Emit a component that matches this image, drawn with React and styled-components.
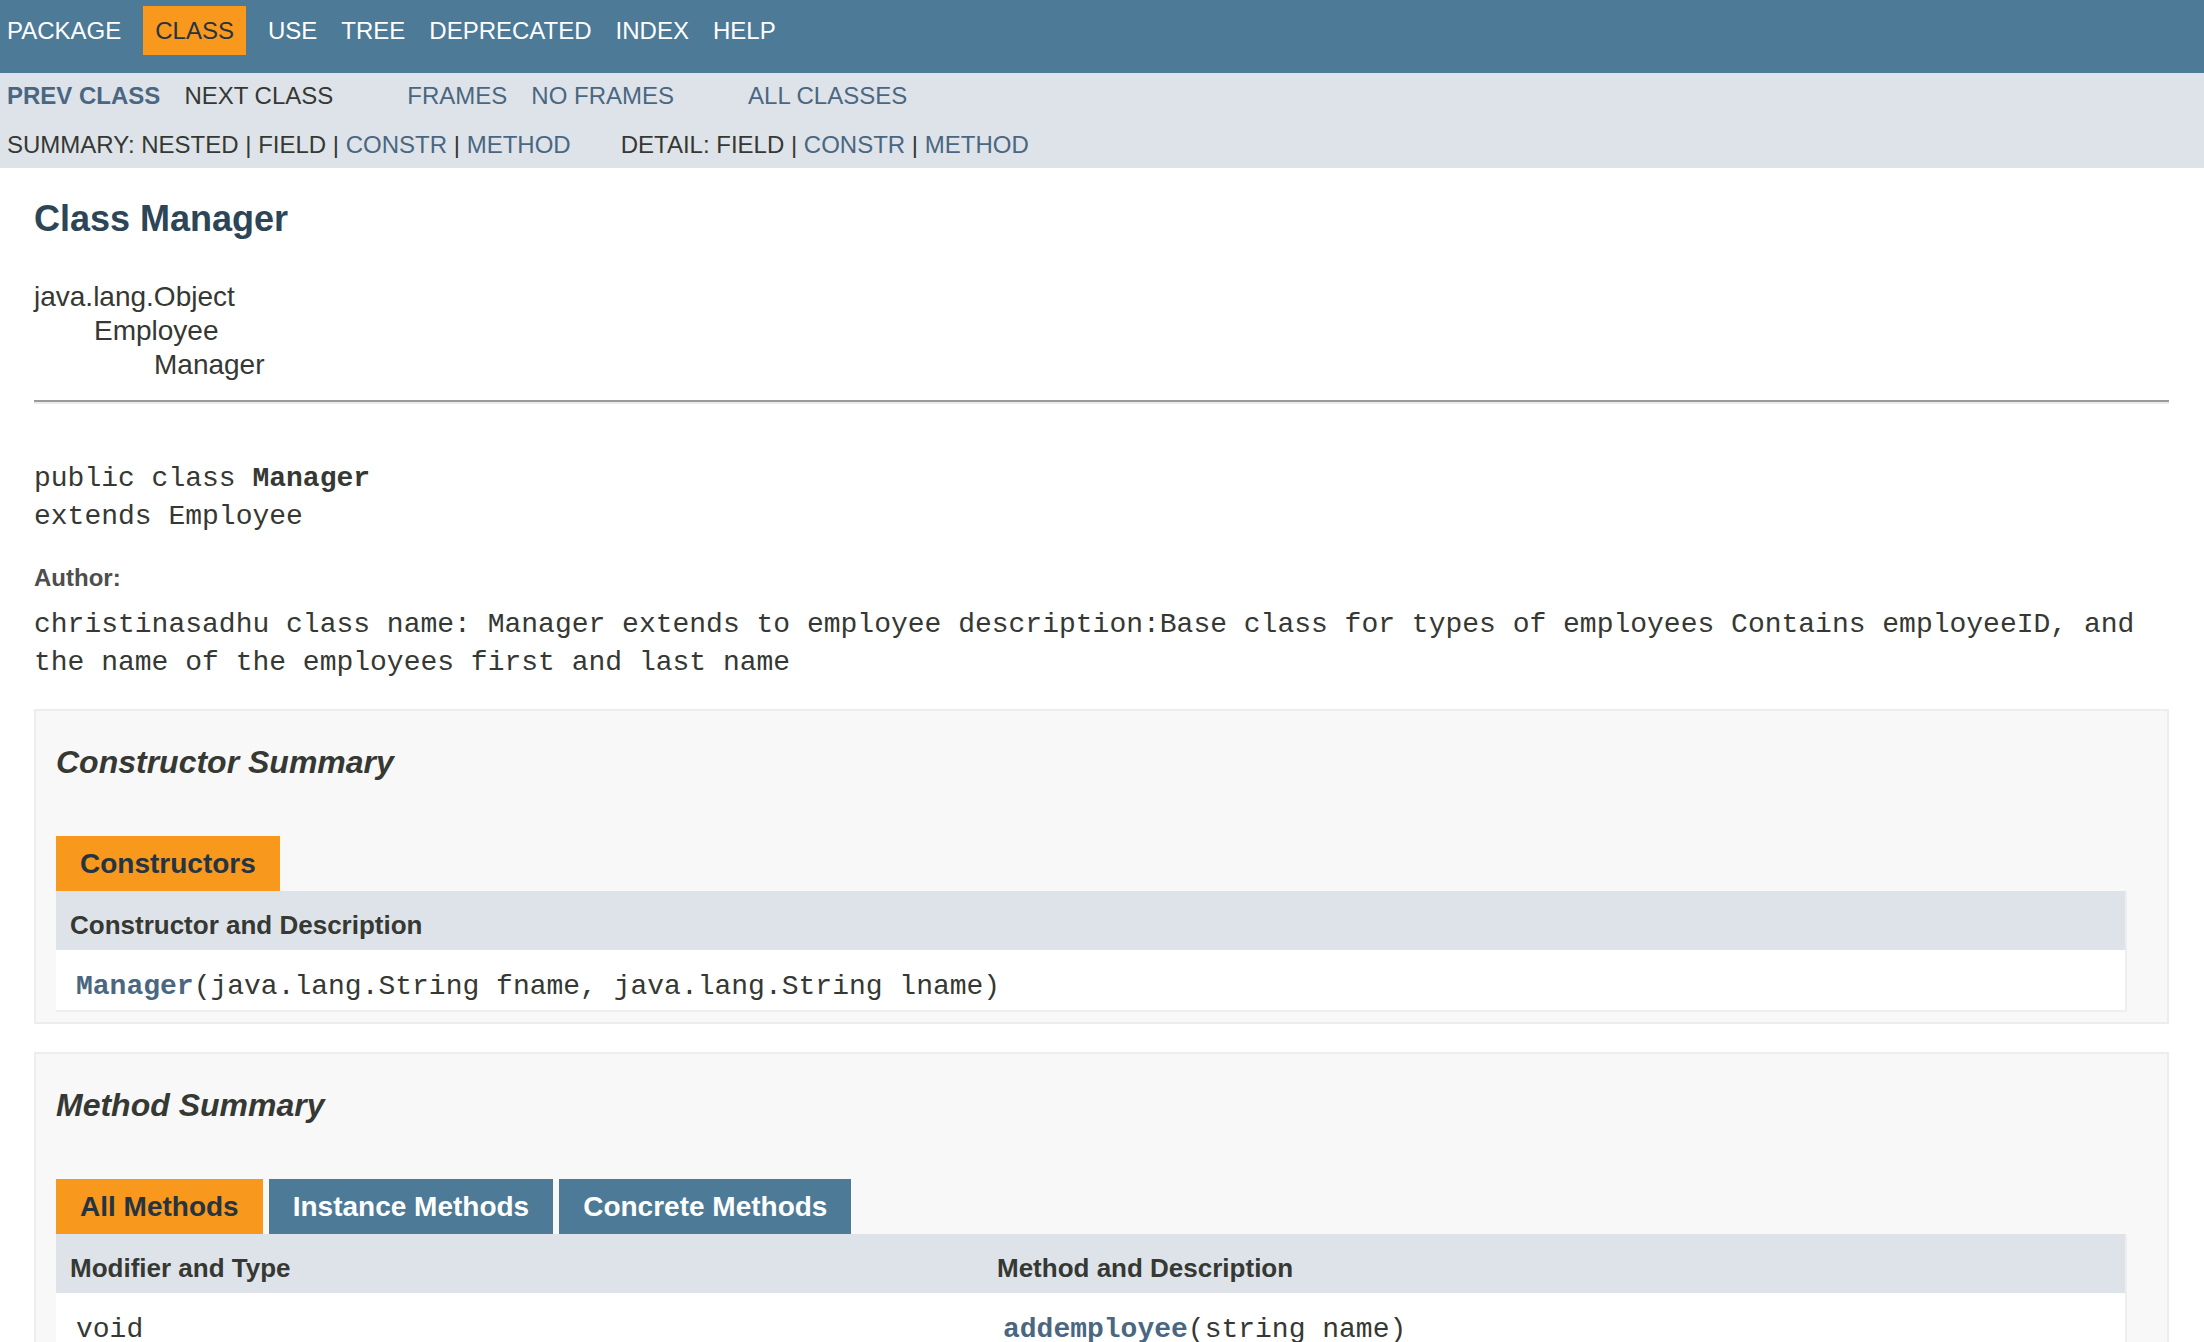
import styled, { createGlobalStyle } from 'styled-components';

const GlobalStyle = createGlobalStyle`
	html, body {
		margin: 0;
		padding: 0;
		overflow: hidden;
		background: #ffffff;
	}
	body {
		font-family: 'Liberation Sans', Arial, Helvetica, sans-serif;
		color: #353833;
	}
	a {
		color: #4a6782;
		text-decoration: none;
	}
`;

const topItems = ['Package', 'Class', 'Use', 'Tree', 'Deprecated', 'Index', 'Help'];

export default function App() {
	return (
		<>
			<GlobalStyle />
			<TopNav>
				<NavList>
					{topItems.map((item) => (
						<NavItem key={item} $active={item === 'Class'}>
							{item}
						</NavItem>
					))}
				</NavList>
			</TopNav>

			<SubNav>
				<SubRow>
					<SubList>
						<SubItem>
							<a href='#prev'>
								<strong>Prev Class</strong>
							</a>
						</SubItem>
						<SubItem>Next Class</SubItem>
					</SubList>
					<SubList>
						<SubItem>
							<a href='#frames'>Frames</a>
						</SubItem>
						<SubItem>
							<a href='#noframes'>No Frames</a>
						</SubItem>
					</SubList>
					<SubList>
						<SubItem>
							<a href='#all'>All Classes</a>
						</SubItem>
					</SubList>
				</SubRow>
				<SubRow $second>
					<SubList $tight>
						<SubItem $tight>
							Summary:&nbsp;Nested&nbsp;|&nbsp;Field&nbsp;|&nbsp;
							<a href='#constr'>Constr</a>&nbsp;|&nbsp;
							<a href='#method'>Method</a>
						</SubItem>
					</SubList>
					<SubList $tight>
						<SubItem $tight>
							Detail:&nbsp;Field&nbsp;|&nbsp;
							<a href='#constr'>Constr</a>&nbsp;|&nbsp;
							<a href='#method'>Method</a>
						</SubItem>
					</SubList>
				</SubRow>
			</SubNav>

			<Content>
				<Title>Class Manager</Title>
				<Tree>
					<TreeLine $depth={0}>java.lang.Object</TreeLine>
					<TreeLine $depth={1}>Employee</TreeLine>
					<TreeLine $depth={2}>Manager</TreeLine>
				</Tree>
				<Rule />
				<Signature>
					public class <strong>Manager</strong>
					{'\n'}extends Employee
				</Signature>
				<TagLabel>Author:</TagLabel>
				<TagText>
					christinasadhu class name: Manager extends to employee description:Base class for types of
					employees Contains employeeID, and the name of the employees first and last name
				</TagText>

				<Block>
					<BlockTitle>Constructor Summary</BlockTitle>
					<Tabs>
						<Tab $active>Constructors</Tab>
					</Tabs>
					<SummaryTable $cols='1fr'>
						<HeadCell>Constructor and Description</HeadCell>
						<Cell>
							<MemberLink href='#manager'>Manager</MemberLink>(java.lang.String fname, java.lang.String lname)
						</Cell>
					</SummaryTable>
				</Block>

				<Block>
					<BlockTitle>Method Summary</BlockTitle>
					<Tabs>
						<Tab $active>All Methods</Tab>
						<Tab>Instance Methods</Tab>
						<Tab>Concrete Methods</Tab>
					</Tabs>
					<SummaryTable $cols='927px 1fr'>
						<HeadCell>Modifier and Type</HeadCell>
						<HeadCell>Method and Description</HeadCell>
						<Cell>void</Cell>
						<Cell>
							<MemberLink href='#addemployee'>addemployee</MemberLink>(string name)
						</Cell>
					</SummaryTable>
				</Block>
			</Content>
		</>
	);
}

const TopNav = styled.div`
	background: #4d7a97;
	height: 73px;
	box-sizing: border-box;
	padding-top: 6px;
	display: flex;
	align-items: flex-start;
`;

const NavList = styled.ul`
	display: flex;
	align-items: flex-start;
	margin: 0 0 0 -5px;
	padding: 0;
	list-style: none;
`;

const NavItem = styled.li`
	padding: 10px 12px;
	margin: ${(p) => (p.$active ? '0 10px' : '0')};
	font-size: 24px;
	line-height: 29px;
	text-transform: uppercase;
	color: ${(p) => (p.$active ? '#253441' : '#ffffff')};
	background: ${(p) => (p.$active ? '#f8981d' : 'transparent')};
`;

const SubNav = styled.div`
	background: #dee3e9;
	padding: 8px 0 9px;
`;

const SubRow = styled.div`
	display: flex;
	margin-left: ${(p) => (p.$second ? '7px' : '-5px')};
	margin-top: ${(p) => (p.$second ? '20px' : '0')};
`;

const SubList = styled.ul`
	display: flex;
	margin: 0 50px 0 0;
	padding: 0;
	list-style: none;
`;

const SubItem = styled.li`
	padding: ${(p) => (p.$tight ? '0' : '0 12px')};
	font-size: 24px;
	line-height: 29px;
	text-transform: uppercase;
	white-space: nowrap;
`;

const Content = styled.div`
	padding: 0 35px 0 34px;
`;

const Title = styled.h2`
	margin: 29px 0 0;
	font-size: 36px;
	line-height: 44px;
	font-weight: bold;
	color: #2c4557;
`;

const Tree = styled.div`
	margin-top: 39px;
	font-size: 28px;
	line-height: 34px;
`;

const TreeLine = styled.div`
	padding-left: ${(p) => p.$depth * 60}px;
`;

const Rule = styled.hr`
	margin: 18px 0 0;
	height: 0;
	border: 0;
	border-top: 2px solid #9a9a9a;
	border-bottom: 2px solid #ececec;
`;

const Signature = styled.pre`
	margin: 56px 0 0;
	font-family: 'Liberation Mono', 'Courier New', monospace;
	font-size: 28px;
	line-height: 38px;
	white-space: pre-wrap;
`;

const TagLabel = styled.div`
	margin-top: 25px;
	font-size: 24px;
	line-height: 34px;
	font-weight: bold;
	color: #4e4e4e;
`;

const TagText = styled.div`
	margin-top: 11px;
	font-family: 'Liberation Mono', 'Courier New', monospace;
	font-size: 28px;
	line-height: 38px;
`;

const Block = styled.section`
	margin-top: 27px;
	background: #f8f8f8;
	border: 2px solid #ededed;
	padding: 0 40px 10px 20px;

	& + & {
		margin-top: 28px;
	}
`;

const BlockTitle = styled.h3`
	margin: 29px 0 0;
	font-size: 32px;
	line-height: 44px;
	font-weight: bold;
	font-style: italic;
`;

const Tabs = styled.div`
	display: flex;
	gap: 6px;
	margin-top: 52px;
`;

const Tab = styled.div`
	height: 55px;
	padding: 0 24px;
	font-size: 28px;
	line-height: 55px;
	font-weight: bold;
	white-space: nowrap;
	color: ${(p) => (p.$active ? '#253441' : '#ffffff')};
	background: ${(p) => (p.$active ? '#f8981d' : '#4d7a97')};
`;

const SummaryTable = styled.div`
	display: grid;
	grid-template-columns: ${(p) => p.$cols};
	border-right: 2px solid #eeeeee;
	border-bottom: 2px solid #eeeeee;
`;

const HeadCell = styled.div`
	background: #dee3e9;
	padding: 16px 6px 6px 14px;
	font-size: 26px;
	line-height: 37px;
	font-weight: bold;
`;

const Cell = styled.div`
	background: #ffffff;
	padding: 17px 6px 4px 20px;
	font-family: 'Liberation Mono', 'Courier New', monospace;
	font-size: 28px;
	line-height: 39px;
	white-space: nowrap;
`;

const MemberLink = styled.a`
	font-weight: bold;
`;
